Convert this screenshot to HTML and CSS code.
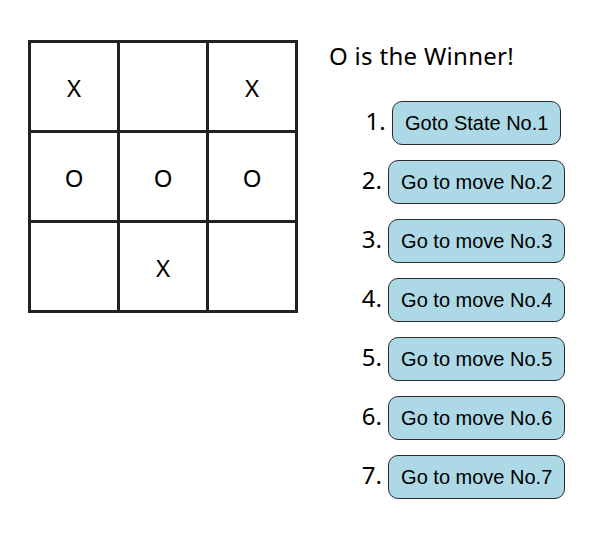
FILE: index.html
```html
<!DOCTYPE html>
<html lang="en">
<head>
<meta charset="utf-8">
<title>Tic Tac Toe</title>
<link rel="stylesheet" href="styles.css">
</head>
<body>
<div class="game">
  <div class="board">
    <div class="square">X</div>
    <div class="square"></div>
    <div class="square">X</div>
    <div class="square">O</div>
    <div class="square">O</div>
    <div class="square">O</div>
    <div class="square"></div>
    <div class="square">X</div>
    <div class="square"></div>
  </div>
  <div class="info">
    <div class="status">O is the Winner!</div>
    <ol class="moves">
      <li><button class="move">Goto State No.1</button></li>
      <li><button class="move">Go to move No.2</button></li>
      <li><button class="move">Go to move No.3</button></li>
      <li><button class="move">Go to move No.4</button></li>
      <li><button class="move">Go to move No.5</button></li>
      <li><button class="move">Go to move No.6</button></li>
      <li><button class="move">Go to move No.7</button></li>
    </ol>
  </div>
</div>
</body>
</html>
```
FILE: styles.css
```css
html, body {
  margin: 0;
  padding: 0;
  background: #ffffff;
}

body {
  font-family: "Noto Sans", "Open Sans", sans-serif;
  color: #000;
}

.game {
  display: flex;
  align-items: flex-start;
  padding: 40px 0 0 28px;
}

.board {
  display: grid;
  grid-template-columns: repeat(3, 89px);
  grid-template-rows: repeat(3, 90px);
  border-top: 3px solid #222;
  border-left: 3px solid #222;
}

.square {
  box-sizing: border-box;
  border-right: 3px solid #222;
  border-bottom: 3px solid #222;
  display: flex;
  align-items: center;
  justify-content: center;
  font-size: 24px;
  padding-top: 2px;
}

.info {
  margin-left: 31px;
  width: 269px;
}

.status {
  font-size: 24px;
  line-height: 32px;
  letter-spacing: 0.3px;
}

.moves {
  margin: 29px 0 0;
  padding: 0;
  list-style-position: inside;
  text-align: center;
  font-size: 24px;
}

.moves li {
  margin-bottom: 15px;
}

.move {
  height: 44px;
  padding: 0 12px;
  font-family: "Liberation Sans", Arial, sans-serif;
  font-size: 20px;
  color: #000;
  background: #add8e6;
  border: 1px solid #2a2a2a;
  border-radius: 10px;
}
```
